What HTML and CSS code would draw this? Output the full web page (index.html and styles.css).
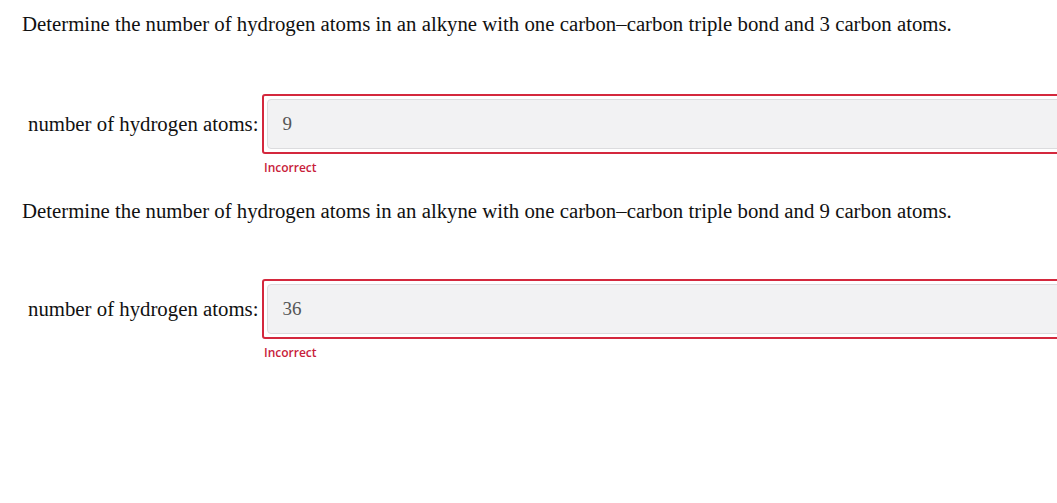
FILE: index.html
```html
<!DOCTYPE html>
<html lang="en">
<head>
  <meta charset="UTF-8">
  <title>Alkyne Hydrogen Atoms</title>
  <link rel="stylesheet" href="styles.css">
</head>
<body>
  <div class="problem">
    <p class="question">Determine the number of hydrogen atoms in an alkyne with one carbon&ndash;carbon triple bond and 3 carbon atoms.</p>
    <div class="field">
      <label class="field-label" for="answer1">number of hydrogen atoms:</label>
      <div class="answer-box">
        <input type="text" id="answer1" class="answer-input" value="9">
      </div>
    </div>
    <div class="feedback">Incorrect</div>
  </div>

  <div class="problem">
    <p class="question">Determine the number of hydrogen atoms in an alkyne with one carbon&ndash;carbon triple bond and 9 carbon atoms.</p>
    <div class="field">
      <label class="field-label" for="answer2">number of hydrogen atoms:</label>
      <div class="answer-box">
        <input type="text" id="answer2" class="answer-input" value="36">
      </div>
    </div>
    <div class="feedback">Incorrect</div>
  </div>
</body>
</html>
```

FILE: styles.css
```css
html, body {
  overflow: hidden;
}

body {
  font-family: "Liberation Serif", "Times New Roman", serif;
  font-size: 20.8px;
  background: #fff;
  color: #111;
  margin: 0;
  padding: 0 22px;
}

.question {
  margin: 13px 0 0;
  line-height: 22px;
}

.problem + .problem .question {
  margin-top: 24px;
}

.field {
  display: flex;
  align-items: center;
  gap: 4px;
  margin-top: 59px;
  padding-left: 6px;
}

.problem + .problem .field {
  margin-top: 57px;
}

.field-label {
  white-space: nowrap;
}

.answer-box {
  flex: none;
  width: 820px;
  border: 2px solid #d4283d;
  border-radius: 3px;
  padding: 3px;
}

.answer-input {
  display: block;
  box-sizing: border-box;
  width: 100%;
  height: 50px;
  padding: 0 14px;
  background: #f2f2f3;
  border: 1px solid #dcdcde;
  border-radius: 4px;
  font-family: "Liberation Serif", "Times New Roman", serif;
  font-size: 19px;
  color: #555;
  outline: none;
}

.feedback {
  margin: 6px 0 0 242px;
  font-family: "Open Sans", Arial, sans-serif;
  font-weight: 600;
  font-size: 12px;
  line-height: 16px;
  color: #c8203a;
}
```
